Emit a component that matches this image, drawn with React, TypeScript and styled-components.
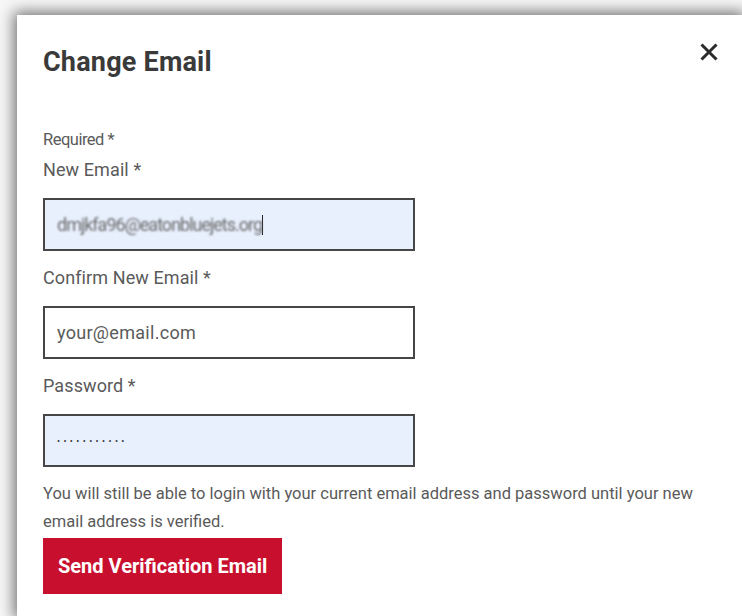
import styled, { createGlobalStyle } from "styled-components";

const GlobalStyle = createGlobalStyle`
  html, body {
    margin: 0;
    padding: 0;
    overflow: hidden;
    background: #f7f7f7;
  }

  body {
    font-family: Roboto, "Liberation Sans", Arial, sans-serif;
  }
`;

const Backdrop = styled.div`
  padding: 15px 0 0 17px;
  height: 616px;
  box-sizing: border-box;
  overflow: hidden;
`;

const Modal = styled.section`
  width: 725px;
  height: 601px;
  background: #ffffff;
  box-shadow: 0 0 14px 3px rgba(0, 0, 0, 0.55);
  padding: 32px 23px 0 26px;
  box-sizing: border-box;
`;

const Header = styled.header`
  display: flex;
  justify-content: space-between;
  align-items: flex-start;
`;

const Title = styled.h2`
  margin: 0;
  font-size: 27px;
  line-height: 30px;
  font-weight: 700;
  letter-spacing: 0.2px;
  color: #3a3a3a;
`;

const CloseButton = styled.button`
  border: none;
  background: none;
  padding: 0;
  margin-top: -6px;
  width: 21px;
  height: 21px;
  display: flex;
  align-items: center;
  justify-content: center;
  cursor: pointer;
`;

const Form = styled.form`
  display: flex;
  flex-direction: column;
  align-items: flex-start;
  margin-top: 51px;
`;

const Note = styled.p`
  margin: 0;
  font-size: 16.5px;
  line-height: 24px;
  letter-spacing: -0.5px;
  color: #5a5a5a;
`;

const Label = styled.label<{ $gap?: number }>`
  font-size: 18px;
  line-height: 24px;
  letter-spacing: 0.1px;
  color: #5a5a5a;
  margin-top: ${(p) => p.$gap ?? 15}px;
  margin-bottom: 16px;
`;

const inputBox = `
  width: 372px;
  height: 53px;
  box-sizing: border-box;
  border: 2px solid #464646;
  padding: 0 12px;
  font-family: Roboto, "Liberation Sans", Arial, sans-serif;
  font-size: 18px;
  color: #555555;
  outline: none;
`;

const TextInput = styled.input<{ $filled?: boolean }>`
  ${inputBox}
  background: ${(p) => (p.$filled ? "#e8f0fe" : "#ffffff")};
  letter-spacing: 0.3px;

  &::placeholder {
    color: #5a5a5a;
  }

  &[type="password"] {
    font-size: 9px;
    letter-spacing: 3.4px;
    color: #333333;
  }
`;

const AutofilledBox = styled.div`
  ${inputBox}
  background: #e8f0fe;
  display: flex;
  align-items: center;
`;

const Scrambled = styled.span`
  filter: blur(1px);
  color: #6a6a6a;
  letter-spacing: -1px;
`;

const Caret = styled.span`
  display: inline-block;
  width: 1px;
  height: 20px;
  background: #222222;
`;

const Help = styled.p`
  margin: 13px 0 0;
  font-size: 16.5px;
  line-height: 28px;
  color: #5a5a5a;
  max-width: 660px;
`;

const SubmitButton = styled.button`
  margin-top: 2px;
  height: 56px;
  padding: 0 15px;
  border: none;
  background: #c8102e;
  color: #ffffff;
  font-family: Roboto, "Liberation Sans", Arial, sans-serif;
  font-size: 20px;
  font-weight: 700;
  cursor: pointer;
`;

const CloseIcon = () => (
  <svg width="20" height="20" viewBox="0 0 20 20">
    <path
      d="M2.5 2.5 L17.5 17.5 M17.5 2.5 L2.5 17.5"
      stroke="#2b2b2b"
      strokeWidth="3"
      fill="none"
    />
  </svg>
);

const App = () => {
  return (
    <>
      <GlobalStyle />
      <Backdrop>
        <Modal>
          <Header>
            <Title>Change Email</Title>
            <CloseButton type="button" aria-label="Close">
              <CloseIcon />
            </CloseButton>
          </Header>
          <Form onSubmit={(e) => e.preventDefault()}>
            <Note>Required *</Note>
            <Label $gap={6}>New Email *</Label>
            <AutofilledBox>
              <Scrambled>dmjkfa96@eatonbluejets.org</Scrambled>
              <Caret />
            </AutofilledBox>
            <Label>Confirm New Email *</Label>
            <TextInput type="email" placeholder="your@email.com" />
            <Label>Password *</Label>
            <TextInput
              type="password"
              $filled
              defaultValue="secretpass1"
              readOnly
            />
            <Help>
              You will still be able to login with your current email address
              and password until your new email address is verified.
            </Help>
            <SubmitButton type="submit">Send Verification Email</SubmitButton>
          </Form>
        </Modal>
      </Backdrop>
    </>
  );
};

export default App;
